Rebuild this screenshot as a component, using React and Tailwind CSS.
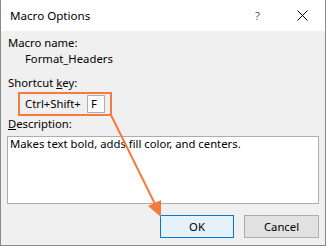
import React from 'react'

const CloseIcon = () => (
    <svg width="11" height="11" viewBox="0 0 11 11">
        <path d="M0.5 0.5 L10.5 10.5 M10.5 0.5 L0.5 10.5" stroke="#000" strokeWidth="1" />
    </svg>
)

const App = () => {
    return (
        <div className="relative w-[326px] h-[246px] flex flex-col border-x border-b border-[#8a8a8a] text-[11.3px] text-black font-['Noto_Sans',sans-serif]">
            {/* title bar */}
            <div className="h-[31px] bg-white flex items-center shrink-0">
                <span className="pl-[9px] leading-[16px] text-[11.6px]">Macro Options</span>
                <div className="ml-auto flex h-full">
                    <div className="w-[45px] flex items-center justify-center leading-[16px] font-light">?</div>
                    <div className="w-[45px] flex items-center justify-center"><CloseIcon /></div>
                </div>
            </div>

            {/* body */}
            <div className="flex-1 bg-[#f0f0f0] px-[6px] pt-[4px] flex flex-col">
                <div className="pl-[1px] leading-[16px]">Macro name:</div>
                <div className="pl-[18px] leading-[16px]">Format_Headers</div>

                <div className="pl-[1px] mt-[8px] leading-[16px]">Shortcut <span className="underline">k</span>ey:</div>
                <div className="mt-[1px] ml-[11px] w-[94px] h-[24px] border-2 border-[#f47b3f] flex items-center pl-[5px]">
                    <span className="leading-[16px]">Ctrl+Shift+</span>
                    <div className="ml-auto mr-[5px] w-[18px] h-[18px] bg-white border border-[#adadad] flex items-center pl-[3px] leading-[16px]">F</div>
                </div>

                <div className="pl-[1px] leading-[16px]"><span className="underline">D</span>escription:</div>
                <div className="mt-[4px] h-[68px] bg-white border border-[#adadad] pl-[2px] leading-[14px]">
                    Makes text bold, adds fill color, and centers.
                </div>

                <div className="mt-[11px] flex justify-end gap-[10px]">
                    <button className="w-[74px] h-[23px] bg-[#e5f1fb] border border-[#0078d7] leading-[16px]">OK</button>
                    <button className="w-[75px] h-[23px] bg-[#e1e1e1] border border-[#adadad] leading-[16px]">Cancel</button>
                </div>
            </div>

            {/* callout arrow */}
            <svg className="absolute left-0 top-0 pointer-events-none" width="326" height="246" viewBox="0 0 326 246">
                <line x1="110" y1="115" x2="155" y2="206" stroke="#f47b3f" strokeWidth="2" />
                <polygon points="160,217 147,206 160,200" fill="#f47b3f" />
            </svg>
        </div>
    )
}

export default App
